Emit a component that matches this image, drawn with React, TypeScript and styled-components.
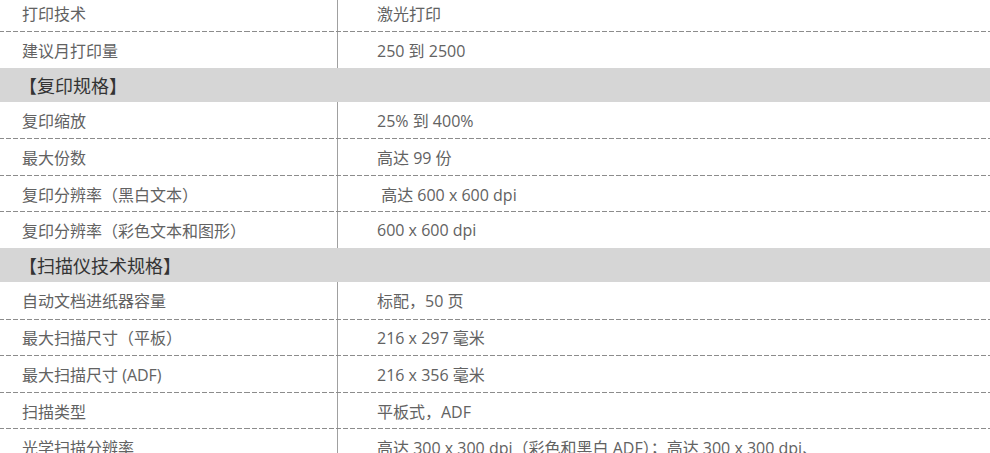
import React from "react"
import styled, {createGlobalStyle} from "styled-components"



type SpecItem = { label: string, value: string }
type SpecGroup = { title?: string, items: SpecItem[] }

const groups: SpecGroup[] = [
  {
    items: [
      { label: '打印技术', value: '激光打印' },
      { label: '建议月打印量', value: '250 到 2500' },
    ],
  },
  {
    title: '【复印规格】',
    items: [
      { label: '复印缩放', value: '25% 到 400%' },
      { label: '最大份数', value: '高达 99 份' },
      { label: '复印分辨率（黑白文本）', value: '\u00a0高达 600 x 600 dpi' },
      { label: '复印分辨率（彩色文本和图形）', value: '600 x 600 dpi' },
    ],
  },
  {
    title: '【扫描仪技术规格】',
    items: [
      { label: '自动文档进纸器容量', value: '标配，50 页' },
      { label: '最大扫描尺寸（平板）', value: '216 x 297 毫米' },
      { label: '最大扫描尺寸 (ADF)', value: '216 x 356 毫米' },
      { label: '扫描类型', value: '平板式，ADF' },
      { label: '光学扫描分辨率', value: '高达 300 x 300 dpi（彩色和黑白 ADF）；高达 300 x 300 dpi、' },
    ],
  },
]



export default function App() {
  return <>
    <GlobalStyle/>
    <SpecTable>
      { groups.map((g, gi) => <React.Fragment key={gi}>
        { g.title && <SectionHead>{g.title}</SectionHead> }
        { g.items.map((it, i) => <Row key={it.label} $divided={i > 0}>
          <Label>{it.label}</Label>
          <Value>{it.value}</Value>
        </Row>) }
      </React.Fragment>) }
    </SpecTable>
  </>
}



const GlobalStyle = createGlobalStyle`
  html, body {
    margin: 0;
    background: #fff;
  }
  body {
    font-family: "Open Sans", "Noto Sans CJK SC", sans-serif;
    font-size: 16px;
    color: #626262;
    overflow: hidden;
  }
  * { box-sizing: border-box }
`

const SpecTable = styled.div`
  display: flex;
  flex-direction: column;
  width: 990px;
  margin-top: -5.6px;
`

const SectionHead = styled.div`
  display: flex;
  align-items: center;
  height: 34px;
  padding-left: 19px;
  background: #d6d6d6;
  color: #333;
  font-size: 18px;
  white-space: nowrap;
`

const Row = styled.div<{ $divided?: boolean }>`
  display: flex;
  align-items: stretch;
  height: 36.6px;
  border-top: 1px solid transparent;
  ${p => p.$divided && `
    border-image: repeating-linear-gradient(to right, #8c8c8c 0 5px, transparent 5px 7px) 1;
  `}
  ${p => !p.$divided && `border-top-width: 0;`}
`

const Label = styled.div`
  display: flex;
  align-items: center;
  flex: 0 0 338px;
  padding-left: 22px;
  border-right: 1px solid #a0a0a0;
  white-space: nowrap;
`

const Value = styled.div`
  display: flex;
  align-items: center;
  flex: 1;
  padding-left: 39px;
  white-space: nowrap;
`
